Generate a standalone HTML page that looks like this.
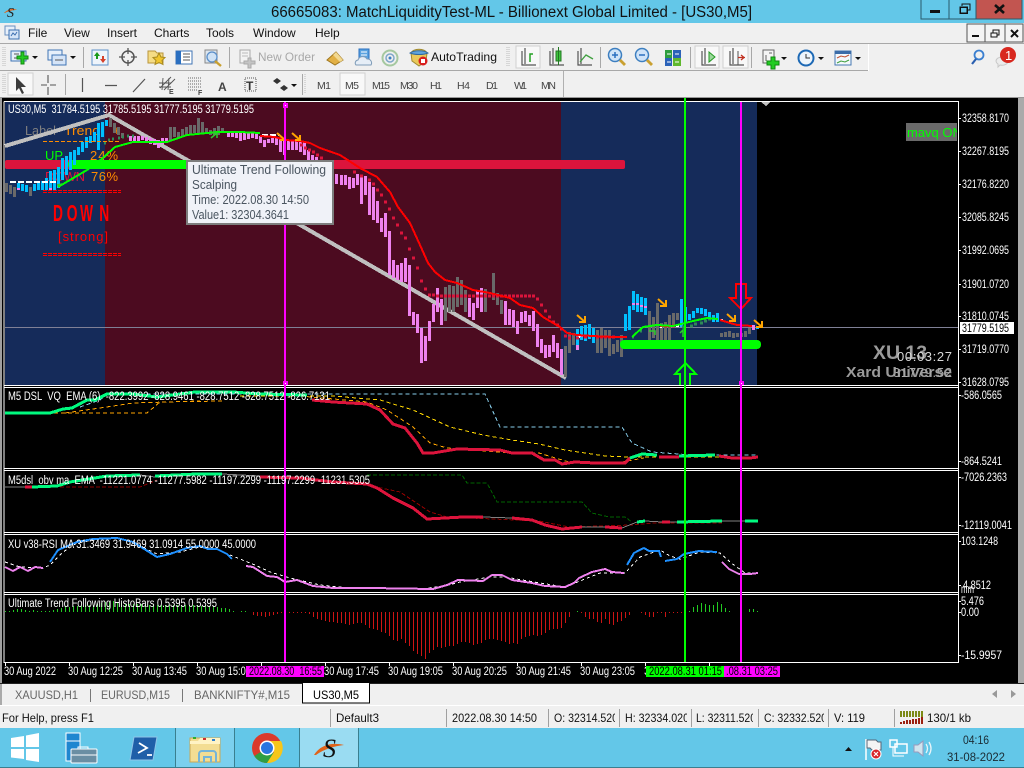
<!DOCTYPE html>
<html><head><meta charset="utf-8"><title>66665083: MatchLiquidityTest-ML</title>
<style>
html,body{margin:0;padding:0;width:1024px;height:768px;overflow:hidden;background:#f0f0f0}
svg{position:absolute;left:0;top:0;display:block}
text{font-family:"Liberation Sans",sans-serif;font-size:11.5px;white-space:pre}
.c text,text.c{fill:#fff}
.u text{font-size:12px;fill:#111}
.tf text{font-size:10.5px;fill:#444}
.ax text{fill:#fff;font-size:11.5px}
.st text{font-size:12px;fill:#111}
.cr{shape-rendering:crispEdges}
.n{fill:none}
</style></head><body>
<svg width="1024" height="768" viewBox="0 0 1024 768" xmlns="http://www.w3.org/2000/svg">
<!-- frame -->
<rect width="1024" height="768" fill="#f0f0f0"/>
<rect width="1024" height="23" fill="#63c7e8"/>
<text x="271" y="17" textLength="481" lengthAdjust="spacingAndGlyphs" fill="#111" style="font-size:15.5px">66665083: MatchLiquidityTest-ML - Billionext Global Limited - [US30,M5]</text>
<!-- app icon -->
<path d="M4 13C8 9 13 8 17 10C13 10 8 11 5 13Z" fill="#e0641a"/><text x="7" y="17" style="font-size:14px;font-style:italic;font-family:'Liberation Serif',serif" fill="#222">S</text>
<!-- window buttons -->
<g class="cr">
<rect x="921" y="-1" width="28" height="20" fill="#63c7e8" stroke="#2a5a6a"/>
<rect x="949" y="-1" width="27" height="20" fill="#63c7e8" stroke="#2a5a6a"/>
<rect x="976" y="-1" width="46" height="20" fill="#c25550" stroke="#2a5a6a"/>
<rect x="930" y="10" width="10" height="3" fill="#111"/>
<rect x="960" y="7" width="7" height="6" class="n" stroke="#111" stroke-width="1.5"/>
<path d="M962 6V4H970V10H968" class="n" stroke="#111" stroke-width="1.2"/>
</g>
<path d="M995 5L1004 13M1004 5L995 13" stroke="#111" stroke-width="2.6"/>
<!-- menu -->
<g class="u">
<text x="28" y="37">File</text><text x="64" y="37">View</text><text x="107" y="37">Insert</text><text x="154" y="37">Charts</text><text x="206" y="37">Tools</text><text x="253" y="37">Window</text><text x="315" y="37">Help</text>
</g>
<rect x="5" y="26" width="10" height="9" fill="#e8f0fa" stroke="#6a8fc0"/><rect x="9" y="30" width="10" height="9" fill="#d5e4f7" stroke="#3c6fb0"/><path d="M11 36l2-3 2 2 2-3" class="n" stroke="#3c6fb0"/>
<g class="cr">
<rect x="967" y="24" width="18" height="18" fill="#f4f4f4" stroke="#555"/><rect x="985" y="24" width="20" height="18" fill="#f4f4f4" stroke="#555"/><rect x="1005" y="24" width="18" height="18" fill="#f4f4f4" stroke="#555"/>
<rect x="972" y="35" width="7" height="2" fill="#111"/>
<rect x="991" y="33" width="6" height="4" class="n" stroke="#111"/><path d="M993 33V30H999V35H997" class="n" stroke="#111"/>
</g>
<path d="M1011 30L1018 37M1018 30L1011 37" stroke="#111" stroke-width="2"/>
<!-- toolbars -->
<g class="cr">
<rect x="0" y="43" width="1024" height="1" fill="#a8a8a8"/>
<rect x="0" y="70" width="868" height="1" fill="#a8a8a8"/>
<rect x="868" y="44" width="1" height="27" fill="#fff"/>
<rect x="563" y="71" width="1" height="26" fill="#b0b0b0"/>
<path d="M3 47V67M5 47V67M3 74V94M5 74V94M507 47V67M509 47V67M305 74V94" stroke="#bbb" stroke-dasharray="1 1"/>
<path d="M83.500 47V68M229.500 47V68M600.500 47V68M690.500 47V68M751.500 47V68M65.500 74V95M302.500 74V95" stroke="#a8a8a8"/>
<g fill="#f8f8f8" stroke="#d0d0d0"><rect x="516" y="46" width="24" height="22"/><rect x="695" y="46" width="24" height="22"/><rect x="723" y="46" width="25" height="22"/><rect x="8" y="73" width="25" height="22"/><rect x="340" y="73" width="25" height="22"/></g>
</g>
<!-- tb1 icons -->
<rect x="11" y="51" width="15" height="10" fill="#e6effa" stroke="#3f74b5"/><path d="M14 54h5M14 58h8" stroke="#555"/><path d="M21 52h3v4h4v3h-4v5h-3v-5h-4v-3h4z" fill="#22cc22" stroke="#118811"/>
<path d="M32 56h6l-3 3z" fill="#111"/>
<rect x="48" y="50" width="14" height="10" fill="#e6effa" stroke="#3f74b5"/><rect x="52" y="55" width="14" height="10" fill="#d5e4f7" stroke="#3f74b5"/><path d="M55 60h8" stroke="#555"/>
<path d="M70 56h6l-3 3z" fill="#111"/>
<rect x="92" y="50" width="16" height="15" fill="#eef4fb" stroke="#5b8fc9"/><path d="M97 52l3 4h-2v3h-2v-3h-2z" fill="#1a9a1a"/><path d="M103 63l-3-4h2v-3h2v3h2z" fill="#d5402a"/>
<circle cx="128" cy="57" r="6" class="n" stroke="#555" stroke-width="1.5"/><path d="M128 48v6M128 60v6M119 57h6M131 57h6" stroke="#555" stroke-width="1.3"/>
<path d="M148 51h7l2 2h6v10h-15z" fill="#f5dc85" stroke="#b9953a"/><path d="M159 53l2 4 4 .5-3 3 1 4-4-2-4 2 1-4-3-3 4-.5z" fill="#f0c52e" stroke="#a88a20"/>
<rect x="176" y="51" width="16" height="13" fill="#fff" stroke="#3f74b5"/><rect x="176" y="51" width="5" height="13" fill="#2a6fc0"/><path d="M183 54h7M183 57h7M183 60h7" stroke="#555"/>
<rect x="205" y="50" width="12" height="13" fill="#dde6ef" stroke="#888"/><circle cx="212" cy="57" r="5" fill="#cfe2f5" stroke="#5b8fc9" stroke-width="1.3"/><path d="M215 61l6 5" stroke="#c9a030" stroke-width="2.4"/>
<rect x="240" y="50" width="10" height="13" fill="#f3f3f3" stroke="#aaa"/><path d="M242 53h6M242 56h6" stroke="#bbb"/><path d="M248 58h3v3h4v3h-4v4h-3v-4h-4v-3h4z" fill="#c4c4c4" stroke="#aaa"/>
<text x="258" y="61" textLength="57" lengthAdjust="spacingAndGlyphs" style="font-size:12px" fill="#a8a8a8">New Order</text>
<path d="M327 60l9-8 7 8-8 5z" fill="#e2b045" stroke="#a07820"/><path d="M336 52l7 8-3 2-7-7z" fill="#f2d890"/>
<rect x="359" y="49" width="10" height="12" fill="#5ba3e0" stroke="#2a6fc0"/><path d="M361 52h6M361 55h6" stroke="#fff"/><path d="M356 65a3 3 0 0 1 2-5 5 5 0 0 1 9-1 4 4 0 0 1 4 6z" fill="#e6eef7" stroke="#7f9cb8"/>
<circle cx="390" cy="58" r="7.500" class="n" stroke="#a5c8a0" stroke-width="2"/><circle cx="390" cy="58" r="4" class="n" stroke="#7fa7c9" stroke-width="1.5"/><circle cx="390" cy="58" r="1.500" fill="#3d7fc0"/>
<path d="M411 53c2-5 14-5 16 0l-1 8-7 5-7-5z" fill="#e9c95a" stroke="#a08a30"/><path d="M410 53c4-3 14-3 18 0-4 2-14 2-18 0z" fill="#5fa4dc" stroke="#31699c"/><circle cx="423" cy="61" r="4.500" fill="#d81e1e"/><rect x="421" y="59" width="4" height="4" fill="#fff"/>
<text x="431" y="61" textLength="66" lengthAdjust="spacingAndGlyphs" style="font-size:12px" fill="#111">AutoTrading</text>
<g stroke="#555" class="n" stroke-width="1.200">
<path d="M522 51V65H536M525 48v16"/><path d="M550 51V65H564M553 48v16"/><path d="M578 51V65H592M581 48v16"/><path d="M702 51V65H716M705 48v16"/><path d="M730 51V65H744M733 48v16"/>
</g>
<path d="M530 62V54h3" class="n" stroke="#22a022" stroke-width="1.500"/>
<rect x="556" y="51" width="5" height="10" fill="#3ec43e" stroke="#227722"/><path d="M558.500 47v18" stroke="#227722"/>
<path d="M580 62l6-7 7 4" class="n" stroke="#40a040" stroke-width="1.300"/>
<path d="M709 52l6 5-6 5z" fill="#9ad89a" stroke="#229922"/>
<path d="M738 51v14" stroke="#555"/><path d="M738 57.500h7M741 55l3 2.500-3 2.500" class="n" stroke="#c03020" stroke-width="1.300"/>
<g><circle cx="615" cy="55" r="6.500" fill="#cfe3f8" stroke="#3d7fc0" stroke-width="1.500"/><path d="M612 55h6M615 52v6" stroke="#2a6fc0" stroke-width="1.500"/><path d="M620 60l5 5" stroke="#c9a030" stroke-width="2.800"/>
<circle cx="642" cy="55" r="6.500" fill="#cfe3f8" stroke="#3d7fc0" stroke-width="1.500"/><path d="M639 55h6" stroke="#2a6fc0" stroke-width="1.500"/><path d="M647 60l5 5" stroke="#c9a030" stroke-width="2.800"/></g>
<g class="cr"><rect x="665" y="50" width="7" height="8" fill="#2e9e3e"/><rect x="673" y="50" width="8" height="8" fill="#2b62b8"/><rect x="665" y="58" width="7" height="8" fill="#2b62b8"/><rect x="673" y="58" width="8" height="8" fill="#5fb82e"/><path d="M667 54h4M675 54h4M667 62h4M675 62h4" stroke="#fff"/></g>
<rect x="763" y="50" width="11" height="13" fill="#f4f4f4" stroke="#666"/><path d="M766 55v6M769 53h3" stroke="#666"/><path d="M771 57h4v4h4v4h-4v4h-4v-4h-4v-4h4z" fill="#22cc22" stroke="#118811"/>
<path d="M781 57h6l-3 3z" fill="#111"/>
<circle cx="806" cy="58" r="7.500" fill="#eef5fb" stroke="#1d69b5" stroke-width="2"/><path d="M806 54v4h4" class="n" stroke="#333"/>
<path d="M818 57h6l-3 3z" fill="#111"/>
<rect x="835" y="51" width="16" height="14" fill="#f4f8fc" stroke="#4678b2"/><rect x="835" y="51" width="16" height="3" fill="#3b6ca8"/><path d="M837 58l4-2 4 1 4-2" class="n" stroke="#c05030"/><path d="M837 63l4-2 4 1 4-2" class="n" stroke="#40a040"/>
<path d="M855 57h6l-3 3z" fill="#111"/>
<circle cx="979" cy="55" r="4.500" class="n" stroke="#3a7fd0" stroke-width="1.800"/><path d="M976 59l-4 5" stroke="#2a5fb0" stroke-width="2.200"/>
<path d="M996 61a6 4 0 0 1 12 0 6 4 0 0 1-8 4l-2 2v-3a4 4 0 0 1-2-3z" fill="#ececec" stroke="#c8c8c8"/>
<circle cx="1008" cy="55" r="8" fill="#d8281f"/><text x="1005" y="60" fill="#fff" style="font-size:13px">1</text>
<!-- tb2 -->
<path d="M16 77v14l3-3 3 6 2-1-3-6h5z" fill="#3c3c3c"/>
<path d="M48 75v8M48 87v8M41 85h6M50 85h6" stroke="#555" stroke-width="1.100"/>
<path d="M82.500 78V92M105 85.500h12M133 92L145 79" stroke="#555" stroke-width="1.200"/>
<path d="M160 88l11-11M164 90l11-11M159 83h12M159 87h12M163 78l-1 12M169 78l-1 12" stroke="#555" stroke-width=".9"/>
<text x="169" y="94" fill="#444" style="font-size:7px;font-weight:bold">E</text>
<path d="M188 78h14M188 81h14M188 84h14M188 87h14M188 90h10" stroke="#666" stroke-dasharray="1 1"/>
<text x="198" y="95" fill="#444" style="font-size:7px;font-weight:bold">F</text>
<text x="218" y="91" fill="#444" style="font-size:12px;font-weight:bold">A</text>
<rect x="245" y="78" width="11" height="13" class="n" stroke="#555" stroke-dasharray="1 1"/><text x="246" y="90" fill="#333" style="font-size:12px;font-weight:bold">T</text>
<path d="M273 81l4-3 4 3-4 3zM280 88l4-3 4 3-4 3z" fill="#333"/><path d="M291 84h6l-3 3z" fill="#111"/>
<g class="tf">
<text x="317" y="89" textLength="14">M1</text><text x="345" y="89" textLength="14">M5</text><text x="372" y="89" textLength="18">M15</text><text x="400" y="89" textLength="18">M30</text><text x="430" y="89" textLength="12">H1</text><text x="457" y="89" textLength="13">H4</text><text x="486" y="89" textLength="12">D1</text><text x="514" y="89" textLength="13">W1</text><text x="541" y="89" textLength="15">MN</text>
</g>
<!-- chart area -->
<g class="cr">
<rect x="0" y="97" width="1024" height="1" fill="#999"/>
<rect x="2" y="98" width="1016" height="585" fill="#000"/>
<rect x="0" y="98" width="2" height="587" fill="#a0a0a0"/>
<rect x="1018" y="98" width="6" height="587" fill="#aaa"/>
<rect x="5" y="102" width="100" height="283" fill="#152b5a"/>
<rect x="105" y="102" width="456" height="283" fill="#4c0b20"/>
<rect x="561" y="102" width="196" height="283" fill="#152b5a"/>
<path d="M4 101.500H958.500V662.500H4V101.500M4 385.500H958M4 387.500H958M4 468.500H958M4 470.500H958M4 532.500H958M4 534.500H958M4 592.500H958M4 594.500H958" class="n" stroke="#fff"/>
<path d="M5 327.500H958" stroke="#7f8096"/>
</g>
<!-- overlay text (under bars) -->
<text x="25" y="135" fill="#808080" textLength="31" lengthAdjust="spacingAndGlyphs" style="font-size:13px">Label</text>
<text x="64" y="135" fill="#ff8c00" textLength="36" lengthAdjust="spacingAndGlyphs" style="font-size:13px">Trend</text>
<text x="113" y="135" fill="#ff8c00" style="font-size:13px">+</text>
<text x="45" y="160" fill="#0f0" style="font-size:13px">UP</text>
<text x="90" y="160" fill="#ff8c00" textLength="28" style="font-size:13px">24%</text>
<text x="45" y="181" fill="#dc143c" textLength="40" style="font-size:13px">DOWN</text>
<text x="91" y="181" fill="#ff8c00" textLength="27" style="font-size:13px">76%</text>
<!-- trend line -->
<path class="cr n" d="M5 146L109 115L566 378" stroke="#c0c0c0" stroke-width="4"/>
<!-- red/green bars -->
<rect x="5" y="160" width="620" height="9" rx="2" fill="#dc143c"/>
<rect x="68" y="160" width="125" height="9" rx="4" fill="#00ff00"/>
<!-- candles -->
<g class="cr n" stroke-width="3">
<path stroke="#696969" d="M6.500 183V192M10.500 185V194M14.500 187V197M30.500 187V196M110.500 118V127M114.500 123V133M118.500 127V135M122.500 133V138M170.500 127V140M174.500 127V137M178.500 132V138M182.500 129V136M186.500 127V135M190.500 125V135M194.500 125V133M198.500 118V133M202.500 122V133M206.500 128V133M210.500 130V135M214.500 128V135M218.500 126V135M222.500 128V133
M445.500 287V321M449.500 285V312M453.500 286V312M457.500 277V307M461.500 280V305M465.500 290V312M485.500 289V312M493.500 273V300M497.500 293V305M501.500 300V314M565.500 346V377M569.500 332V353M573.500 333V345M597.500 330V353M601.500 328V353M605.500 330V348M609.500 330V356M613.500 344V354M617.500 340V352M621.500 335V357
M649.500 311V340M653.500 317V338M657.500 303V340M661.500 323V340M665.500 322V340M669.500 315V340M673.500 313V327M677.500 313V320M721.500 333V337M725.500 332V337M729.500 331V337M733.500 333V338M737.500 333V337M741.500 333V337M745.500 331V337M749.500 328V334"/>
<path stroke="#00bfff" d="M18.500 183V190M22.500 184V191M26.500 185V192M34.500 184V191M38.500 183V190M42.500 181V190M46.500 178V190M50.500 171V190M54.500 170V190M58.500 167V188M62.500 158V180M66.500 156V175M70.500 152V170M74.500 150V165M78.500 147V155M82.500 142V152M86.500 137V148M90.500 136V143M94.500 132V142M98.500 123V150M102.500 122V137M106.500 120V126
M577.500 329V350M581.500 326V340M585.500 325V341M589.500 324V339M593.500 328V343M625.500 314V331M629.500 306V330M633.500 291V310M637.500 294V312M641.500 297V312M645.500 298V315M681.500 299V327M685.500 307V323M689.500 314V320M693.500 311V318M697.500 308V313M701.500 308V314M705.500 309V316M709.500 312V320M713.500 315V322M717.500 313V322M753.500 326V330M757.500 326V329"/>
<path stroke="#ee82ee" d="M130.500 136V141M134.500 136V141M138.500 136V141M142.500 136V140M146.500 137V143M150.500 138V144M154.500 139V145M158.500 140V148M162.500 138V144M166.500 138V143
M228.500 133V137M232.500 132V137M236.500 132V138M240.500 132V141M244.500 132V140M248.500 132V139M252.500 133V138M256.500 133V139M260.500 136V143M264.500 140V147M268.500 139V143M272.500 138V143M276.500 138V145M280.500 138V152M284.500 140V155M288.500 140V150M292.500 140V150M296.500 141V150M300.500 142V152M304.500 142V155M308.500 150V162M312.500 155V163M316.500 157V163M320.500 160V172M324.500 165V180M328.500 167V182M332.500 172V183M336.500 174V184
M341.500 175V185M345.500 175V185M349.500 177V189M353.500 178V188M357.500 174V185M361.500 175V204M365.500 176V195M369.500 182V215M373.500 187V220M377.500 201V223M381.500 218V232M385.500 213V237M389.500 231V275M393.500 260V278M397.500 265V280M401.500 263V282M405.500 258V282M409.500 265V316M413.500 312V325M417.500 314V333M421.500 328V363M425.500 336V361M429.500 321V341M433.500 304V322M437.500 288V312M441.500 299V325
M469.500 298V317M473.500 303V320M477.500 290V308M481.500 288V312M505.500 301V325M509.500 309V325M513.500 310V327M517.500 321V334M521.500 312V323M525.500 311V322M529.500 315V326M533.500 311V331M537.500 324V347M541.500 339V353M545.500 345V358M549.500 345V357M553.500 335V352M557.500 343V358M561.500 349V375"/>
<path stroke="#ee82ee" d="M577.500 345V350M581.500 335V337M585.500 335V337M633.500 303V305M637.500 303V305M641.500 305V307M645.500 306V308M18.500 188V190M50.500 188V190M753.500 325V330"/>
</g>
<!-- white dashes -->
<path class="n cr" d="M10 182h48M262 135h18M578 337h2M660 327h2M676 326h3M720 320h3" stroke="#fff" stroke-width="2" stroke-dasharray="6 2"/>
<!-- dots -->
<path class="n cr" stroke="#dc143c" stroke-width="3" d="M353 172h3M360 176h3M368 180h3M372 184h3M376 190h3M380 195h3M384 202h3M388 209h3M392 218h3M396 225h3M400 233h3M404 238h3M408 249h3M412 258h3M416 268h3M420 281h3M424 289h3M428 295h3M432 295h3M436 296h3M440 296h3M444 296h3M448 296h3M452 296h3M456 296h3M460 296h3M464 296h3M468 296h3M472 296h3M476 296h3M480 296h3M484 296h3M488 296h3M492 296h3M496 296h3M500 296h3M504 296h3M508 296h3M512 296h3M516 296h3M520 296h3M524 296h3M528 296h3M532 296h3M536 299h3M540 305h3M544 311h3M548 317h3M552 322h3M556 325h3M560 329h3M564 336h3M568 338h3M576 338h3M584 337h3M596 337h3M600 337h3M604 337h3M608 337h3M612 337h3M300 145h3M304 148h3M308 150h3M312 152h3M316 155h3M320 158h3M664 326h3M668 326h3M672 326h3"/>
<path class="n cr" stroke="#2e8b57" stroke-width="3" d="M104 143h2M108 140h2M112 139h2M118 138h2M122 137h2M127 136h2M132 136h2M632 337h2M640 331h2M660 325h2M682 327h3M690 326h3M694 324h3M700 323h3M704 321h3M708 319h3"/>
<!-- ma lines -->
<path class="n cr" stroke="#f00" stroke-width="2" d="M260 136L275 137L285 140L300 141L310 143L320 148L340 155L360 168L377 177L390 192L398 207L410 223L420 245L428 263L435 272L445 280L457 283L473 290L490 293L510 298L520 305L533 308L543 317L560 327L567 333L577 335L593 336L613 337L627 337"/>
<path class="n cr" stroke="#f00" stroke-width="2" d="M660 326L673 326M720 320L737 325L752 326"/>
<path class="n cr" stroke="#0f0" stroke-width="2" d="M58 187L87 170L103 158L115 147L133 142L167 142L187 135L217 132L240 132L260 133"/>
<path class="n cr" stroke="#0f0" stroke-width="2" d="M632 337L643 327L657 325L673 326L693 321L707 318L718 319"/>
<!-- arrows -->
<g class="n" stroke="#ffa500" stroke-width="2"><path d="M277 133l8 7m0-5v5h-5"/><path d="M292 133l8 7m0-5v5h-5"/><path d="M577 315l8 7m0-6v6h-6"/><path d="M658 299l8 7m0-6v6h-6"/><path d="M727 314l8 7m0-6v6h-6"/><path d="M754 320l8 7m0-6v6h-6"/></g>
<path class="n" stroke="#2dcc2d" stroke-width="1.500" d="M57 185l5-1M211 138l6-5m-5 0h5v5M655 335v-4h-6M683 337v-7l-3 3"/>
<!-- second green bar -->
<rect x="620" y="340" width="141" height="9" rx="4" fill="#0f0"/>
<!-- overlay dashes and DOWN -->
<path class="cr" d="M43 141.500H121" stroke="#ff8c00" stroke-dasharray="4 2"/>
<path class="cr" d="M43 190.500H121M43 192.500H121M43 253.500H121M43 255.500H121" stroke="#f00" stroke-dasharray="4 1"/>
<text transform="translate(53,221) scale(.6,1)" x="0 23 45 77" y="0" fill="#f00" style="font-size:23px;font-weight:bold">DOWN</text>
<text x="58" y="241" fill="#f00" textLength="50" style="font-size:13px">[strong]</text>
<rect class="cr" x="906" y="123" width="51" height="18" fill="#6a6a6a"/>
<svg x="906" y="123" width="51" height="18"><text x="1" y="14" fill="#0f0" style="font-size:13px">mavq ON</text></svg>
<!-- right overlay labels -->
<text x="873" y="359" fill="#9a9a9a" textLength="54" lengthAdjust="spacingAndGlyphs" style="font-size:19px;font-weight:bold">XU 13</text>
<text x="846" y="377" fill="#9a9a9a" textLength="106" lengthAdjust="spacingAndGlyphs" style="font-size:15px;font-weight:bold">Xard Universe</text>
<text x="897" y="361" fill="#d8d8d8" textLength="55" style="font-size:13px">00:03:27</text>
<text x="893" y="377" fill="#a8a8a8" textLength="59" style="font-size:13px">31779.52</text>
<!-- big arrows -->
<path class="n cr" stroke="#f00" stroke-width="2" d="M736 284H746V298H751L741 309L730 298H736Z"/>
<path class="n cr" stroke="#0f0" stroke-width="2" d="M680 385V374H675L685.500 363L696 374H690V385"/>
<!-- pane 2 -->
<g class="n cr" stroke-width="1" stroke-dasharray="4 3">
<path stroke="#87ceeb" d="M80 407L100 400L107 394H485L500 427H622L632 443L652 452L692 455H758"/>
<path stroke="#ffa500" d="M5 413H147L160 402L223 401"/>
<path stroke="#ffa500" d="M65 413L100 408L133 403L200 401"/>
<path stroke="#ffd700" d="M240 396H333L380 400L413 410L450 427L483 435L512 440L539 444L565 450L605 456L629 457H758"/>
<path stroke="#ffa500" d="M300 396L367 402L387 410L413 427L430 443L447 448L512 453H539L552 457L569 462H622L644 458"/>
</g>
<g class="n cr" stroke-width="3">
<path stroke="#00fa7f" d="M5 413L50 413L63 409L72 408L87 400L95 400L107 394L133 394L157 397L195 392L233 392L260 394L307 395"/>
<path stroke="#dc143c" d="M312 400L333 402L367 404L380 410L393 424L405 428L417 443L423 453L433 453L457 449L500 450L512 453L532 453L544 460L555 460L562 464L575 462L595 463L625 463L630 458"/>
<path stroke="#00fa7f" d="M630 458L642 454L657 455M679 456L715 455"/>
<path stroke="#dc143c" d="M659 457L679 457M719 456L732 458L750 458L758 457"/>
</g>
<!-- pane 3 -->
<g class="n cr">
<path stroke="#006400" stroke-dasharray="4 2" d="M367 475H462L467 483H487L497 502H582L592 513L609 517H625L632 522"/>
<path stroke="#8b0000" stroke-dasharray="4 2" d="M60 487H140L157 480M367 485L400 492L430 512L447 517L539 521L569 527L632 525L655 523L685 523H722"/>
<path stroke="#808080" d="M5 487H25M140 475L155 477L197 474M222 474L260 476M483 517L512 518M582 527L605 527M622 528L637 522M645 521L662 522M662 522H677M722 521H745"/>
</g>
<g class="n cr" stroke-width="3">
<path stroke="#00fa7f" d="M32 487L57 486L70 482L107 476L140 475M155 476L197 474L222 474M637 522L645 521M677 522L722 521M745 521L758 521"/>
<path stroke="#dc143c" d="M25 487H32M260 477L300 478L333 482L367 484L377 488L393 498L413 508L427 519L463 517L483 517M512 518L532 520L545 525L562 529L582 527M605 527L622 528M662 522H670"/>
</g>
<!-- pane 4 -->
<path class="n cr" stroke="#fff" stroke-dasharray="3 3" d="M5 562L20 567L43 568L50 565L63 552L77 543L100 539L120 538L140 546L157 554L180 552L200 547L215 549L235 557L255 565L270 572L290 578L320 585L350 588L420 589L445 586L460 582L490 577L505 577L540 583L565 587L580 581L600 573L625 573L640 557L660 550L670 556L680 559L700 552L720 553L730 562L745 573L758 573"/>
<g class="n cr" stroke-width="2">
<path stroke="#ee82ee" d="M5 567L13 571L20 567L28 571L35 567L43 568"/>
<path stroke="#1e90ff" d="M50 562L58 550L77 542L93 539L117 538L133 542L157 557L170 554L187 548L200 546L208 549L217 549L227 554L232 559"/>
<path stroke="#ee82ee" d="M246 566L253 567L267 576L277 577L285 582L297 580L313 586L333 588L370 588L433 589L447 585L458 580L483 581L492 575L502 575L512 580L532 583L545 586L565 587L574 583L579 578L592 572L605 569L612 572L624 573"/>
<path stroke="#1e90ff" d="M627 565L634 553L644 548L649 551L659 551L661 557M665 561L677 559L684 554L699 551L717 552"/>
<path stroke="#ee82ee" d="M722 562L729 569L739 574L750 574L758 573"/>
</g>
<!-- pane 5 histogram -->
<g class="cr n">
<path stroke="#22cc22" d="M5.500 612v-1M9.500 612v-1M13.500 612v-2M17.500 612v-3M21.500 612v-3M25.500 612v-2M29.500 612v-1M33.500 612v-2M37.500 612v-1M41.500 612v-1M45.500 612v-1M49.500 612v-1M53.500 612v-2M57.500 612v-3M61.500 612v-4M65.500 612v-5M69.500 612v-5M73.500 612v-6M77.500 612v-6M81.500 612v-6M85.500 612v-7M89.500 612v-7M93.500 612v-7M97.500 612v-8M101.500 612v-9M105.500 612v-10M109.500 612v-10M113.500 612v-11M117.500 612v-9M121.500 612v-9M125.500 612v-8M129.500 612v-8M133.500 612v-8M137.500 612v-8M141.500 612v-8M145.500 612v-8M149.500 612v-7M153.500 612v-7M157.500 612v-7M161.500 612v-7M165.500 612v-7M169.500 612v-7M173.500 612v-7M177.500 612v-7M181.500 612v-7M185.500 612v-7M189.500 612v-7M193.500 612v-7M197.500 612v-7M201.500 612v-6M205.500 612v-6M209.500 612v-6M213.500 612v-6M217.500 612v-5M221.500 612v-4M225.500 612v-4M229.500 612v-3M233.500 612v-1M241.500 612v-1M245.500 612v-1M577.500 612v-1M689.500 612v-1M693.500 612v-5M697.500 612v-7M701.500 612v-9M705.500 612v-8M709.500 612v-7M713.500 612v-7M717.500 612v-10M721.500 612v-8M725.500 612v-4M729.500 612v-1M749.500 612v-3M753.500 612v-3M757.500 612v-1"/>
<path stroke="#cc1414" d="M253.500 612v3M257.500 612v4M261.500 612v4M265.500 612v5M269.500 612v4M273.500 612v3M277.500 612v2M281.500 612v1M289.500 612v1M293.500 612v1M297.500 612v1M301.500 612v1M305.500 612v1M309.500 612v2M313.500 612v5M317.500 612v7M321.500 612v8M325.500 612v9M329.500 612v10M333.500 612v10M337.500 612v11M341.500 612v11M345.500 612v12M349.500 612v13M353.500 612v12M357.500 612v11M361.500 612v11M365.500 612v13M369.500 612v16M373.500 612v17M377.500 612v18M381.500 612v20M385.500 612v21M389.500 612v24M393.500 612v28M397.500 612v29M401.500 612v27M405.500 612v31M409.500 612v34M413.500 612v39M417.500 612v42M421.500 612v44M425.500 612v47M429.500 612v41M433.500 612v38M437.500 612v35M441.500 612v36M445.500 612v35M449.500 612v34M453.500 612v34M457.500 612v32M461.500 612v30M465.500 612v30M469.500 612v31M473.500 612v33M477.500 612v32M481.500 612v31M485.500 612v28M489.500 612v27M493.500 612v27M497.500 612v28M501.500 612v29M505.500 612v30M509.500 612v32M513.500 612v31M517.500 612v32M521.500 612v27M525.500 612v25M529.500 612v24M533.500 612v23M537.500 612v24M541.500 612v23M545.500 612v21M549.500 612v18M553.500 612v17M557.500 612v17M561.500 612v16M565.500 612v11M569.500 612v5M581.500 612v1M585.500 612v5M589.500 612v7M593.500 612v7M597.500 612v10M601.500 612v11M605.500 612v7M609.500 612v12M613.500 612v13M617.500 612v10M621.500 612v9M625.500 612v6M629.500 612v3M641.500 612v1M645.500 612v3M649.500 612v5M653.500 612v5M657.500 612v1M661.500 612v1M665.500 612v5M669.500 612v1M673.500 612v1M677.500 612v1M681.500 612v1"/>
</g>
<!-- vlines -->
<g class="cr">
<rect x="284" y="102" width="2" height="560" fill="#f0f"/>
<rect x="684" y="98" width="2" height="564" fill="#0f0"/>
<rect x="740" y="102" width="2" height="560" fill="#f0f"/>
<path d="M283 103h5v5h-5zM283 381h5v4h-5zM739 381h5v4h-5z" fill="#f0f"/><path d="M285 105h1v1h-1zM285 383h1v1h-1zM741 383h1v1h-1z" fill="#fff"/>
<path d="M761 102h9l-4 4z" fill="#c0c0c0"/>
</g>
<!-- tooltip -->
<rect x="187" y="161" width="146" height="63" fill="#f0f2f8" stroke="#7d7d7d" stroke-width="2" class="cr"/>
<g fill="#4a5560">
<text x="192" y="174" textLength="134" lengthAdjust="spacingAndGlyphs" style="font-size:12.5px">Ultimate Trend Following</text>
<text x="192" y="189" textLength="45" lengthAdjust="spacingAndGlyphs" style="font-size:12.5px">Scalping</text>
<text x="192" y="204" textLength="117" lengthAdjust="spacingAndGlyphs" style="font-size:12.5px">Time: 2022.08.30 14:50</text>
<text x="192" y="219" textLength="97" lengthAdjust="spacingAndGlyphs" style="font-size:12.5px">Value1: 32304.3641</text>
</g>
<!-- legends -->
<g class="c">
<text x="8" y="113" textLength="246" lengthAdjust="spacingAndGlyphs">US30,M5  31784.5195 31785.5195 31777.5195 31779.5195</text>
<text x="8" y="400" textLength="322" lengthAdjust="spacingAndGlyphs">M5 DSL  VQ  EMA (6)  -822.3992 -828.9461 -828.7512 -828.7512 -826.7131</text>
<text x="8" y="484" textLength="362" lengthAdjust="spacingAndGlyphs">M5dsl  obv ma  EMA  -11221.0774 -11277.5982 -11197.2299 -11197.2299 -11231.5305</text>
<text x="8" y="548" textLength="248" lengthAdjust="spacingAndGlyphs">XU v38-RSI MA 31.3469 31.9469 31.0914 55.0000 45.0000</text>
<text x="8" y="607" textLength="209" lengthAdjust="spacingAndGlyphs">Ultimate Trend Following HistoBars 0.5395 0.5395</text>
</g>
<!-- right axis -->
<path class="cr" stroke="#fff" d="M958 118.500h3M958 151.500h3M958 184.500h3M958 217.500h3M958 250.500h3M958 284.500h3M958 316.500h3M958 349.500h3M958 382.500h3M958 395.500h3M958 461.500h3M958 477.500h3M958 525.500h3M958 541.500h3M958 585.500h3M958 601.500h3M958 612.500h3M958 655.500h3"/>
<g class="ax">
<text x="962" y="122" textLength="47" lengthAdjust="spacingAndGlyphs">32358.8170</text>
<text x="962" y="155" textLength="47" lengthAdjust="spacingAndGlyphs">32267.8195</text>
<text x="962" y="188" textLength="47" lengthAdjust="spacingAndGlyphs">32176.8220</text>
<text x="962" y="221" textLength="47" lengthAdjust="spacingAndGlyphs">32085.8245</text>
<text x="962" y="254" textLength="47" lengthAdjust="spacingAndGlyphs">31992.0695</text>
<text x="962" y="288" textLength="47" lengthAdjust="spacingAndGlyphs">31901.0720</text>
<text x="962" y="320" textLength="47" lengthAdjust="spacingAndGlyphs">31810.0745</text>
<text x="962" y="353" textLength="47" lengthAdjust="spacingAndGlyphs">31719.0770</text>
<text x="962" y="386" textLength="47" lengthAdjust="spacingAndGlyphs">31628.0795</text>
<text x="961" y="399" textLength="41" lengthAdjust="spacingAndGlyphs">-586.0565</text>
<text x="961" y="465" textLength="41" lengthAdjust="spacingAndGlyphs">-864.5241</text>
<text x="961" y="481" textLength="46" lengthAdjust="spacingAndGlyphs">-7026.2363</text>
<text x="961" y="529" textLength="51" lengthAdjust="spacingAndGlyphs">-12119.0041</text>
<text x="961" y="545" textLength="37" lengthAdjust="spacingAndGlyphs">103.1248</text>
<text x="963" y="589" textLength="28" lengthAdjust="spacingAndGlyphs">4.8512</text>
<text x="961" y="593" textLength="13" lengthAdjust="spacingAndGlyphs">mm</text>
<text x="961" y="605" textLength="23" lengthAdjust="spacingAndGlyphs">5.476</text>
<text x="961" y="616" textLength="18" lengthAdjust="spacingAndGlyphs">0.00</text>
<text x="961" y="659" textLength="41" lengthAdjust="spacingAndGlyphs">-15.9957</text>
</g>
<rect class="cr" x="960" y="322" width="54" height="12" fill="#fff"/>
<text x="962" y="332" fill="#000" textLength="47" lengthAdjust="spacingAndGlyphs">31779.5195</text>
<!-- time axis -->
<path class="cr" stroke="#fff" d="M5.500 663v3M69.500 663v3M133.500 663v3M197.500 663v3M261.500 663v3M325.500 663v3M389.500 663v3M453.500 663v3M517.500 663v3M581.500 663v3M645.500 663v3M709.500 663v3"/>
<g class="c">
<text x="4" y="675" textLength="52" lengthAdjust="spacingAndGlyphs">30 Aug 2022</text>
<text x="68" y="675" textLength="55" lengthAdjust="spacingAndGlyphs">30 Aug 12:25</text>
<text x="132" y="675" textLength="55" lengthAdjust="spacingAndGlyphs">30 Aug 13:45</text>
<text x="196" y="675" textLength="55" lengthAdjust="spacingAndGlyphs">30 Aug 15:05</text>
<text x="324" y="675" textLength="55" lengthAdjust="spacingAndGlyphs">30 Aug 17:45</text>
<text x="388" y="675" textLength="55" lengthAdjust="spacingAndGlyphs">30 Aug 19:05</text>
<text x="452" y="675" textLength="55" lengthAdjust="spacingAndGlyphs">30 Aug 20:25</text>
<text x="516" y="675" textLength="55" lengthAdjust="spacingAndGlyphs">30 Aug 21:45</text>
<text x="580" y="675" textLength="55" lengthAdjust="spacingAndGlyphs">30 Aug 23:05</text>
<text x="644" y="675">3</text>
</g>
<g class="cr"><rect x="246" y="666" width="78" height="11" fill="#f0f"/><rect x="646" y="666" width="78" height="11" fill="#0f0"/><rect x="724" y="666" width="56" height="11" fill="#f0f"/></g>
<text x="249" y="675" textLength="73" lengthAdjust="spacingAndGlyphs" fill="#000">2022.08.30  16:55</text>
<text x="649" y="675" textLength="73" lengthAdjust="spacingAndGlyphs" fill="#000">2022.08.31 01:15</text>
<text x="726" y="675" textLength="52" lengthAdjust="spacingAndGlyphs" fill="#000">.08.31 03:25</text>
<!-- tabs -->
<g class="cr">
<rect x="0" y="683" width="1024" height="22" fill="#f0f0f0"/>
<rect x="0" y="683" width="1024" height="1" fill="#222"/>
<rect x="302.500" y="684" width="67" height="19" fill="#fff" stroke="#000"/>
<rect x="303" y="683" width="66" height="2" fill="#fff"/>
<rect x="0" y="684" width="2" height="21" fill="#aaa"/>
<path d="M90.500 689V702M182.500 689V702" stroke="#777"/>
<rect x="0" y="705" width="1024" height="1" fill="#fff"/>
<path d="M330.500 709V727M446.500 709V727M548.500 709V727M619.500 709V727M691.500 709V727M758.500 709V727M828.500 709V727M894.500 709V727" stroke="#a0a0a0"/>
</g>
<g class="st">
<text x="15" y="699" textLength="63" lengthAdjust="spacingAndGlyphs" style="fill:#666">XAUUSD,H1</text>
<text x="101" y="699" textLength="69" lengthAdjust="spacingAndGlyphs" style="fill:#666">EURUSD,M15</text>
<text x="194" y="699" textLength="96" lengthAdjust="spacingAndGlyphs" style="fill:#666">BANKNIFTY#,M15</text>
<text x="313" y="699" textLength="46" lengthAdjust="spacingAndGlyphs" style="fill:#000">US30,M5</text>
<text x="2" y="722" textLength="92" lengthAdjust="spacingAndGlyphs">For Help, press F1</text>
<text x="336" y="722" textLength="43" lengthAdjust="spacingAndGlyphs">Default3</text>
<text x="452" y="722" textLength="85" lengthAdjust="spacingAndGlyphs">2022.08.30 14:50</text>
<text x="554" y="722" textLength="64" lengthAdjust="spacingAndGlyphs">O: 32314.520</text>
<text x="625" y="722" textLength="64" lengthAdjust="spacingAndGlyphs">H: 32334.020</text>
<text x="696" y="722" textLength="60" lengthAdjust="spacingAndGlyphs">L: 32311.520</text>
<text x="764" y="722" textLength="63" lengthAdjust="spacingAndGlyphs">C: 32332.520</text>
<text x="834" y="722" textLength="31" lengthAdjust="spacingAndGlyphs">V: 119</text>
<text x="927" y="722" textLength="44" lengthAdjust="spacingAndGlyphs">130/1 kb</text>
</g>
<g class="cr" fill="#f0f0f0"><rect x="615" y="710" width="4" height="14"/><rect x="687" y="710" width="4" height="14"/><rect x="753" y="710" width="5" height="14"/><rect x="824" y="710" width="4" height="14"/></g>
<path d="M997 690v8l-5-4zM1011 690v8l5-4z" fill="#999"/>
<g class="cr"><path d="M901 711v6M904 711v6M907 711v6M910 711v6M913 711v6M916 711v6M919 711v6M922 711v6" stroke="#7c8a16" stroke-width="2"/><path d="M901 724v-2M904 724v-3M907 724v-4M910 724v-4M913 724v-5M916 724v-5M919 724v-6M922 724v-7" stroke="#9c2010" stroke-width="2"/></g>
<!-- taskbar -->
<g class="cr">
<rect x="0" y="728" width="1024" height="40" fill="#63c7e8"/>
<rect x="175" y="728" width="60" height="40" fill="#7bd0ee"/>
<rect x="299" y="728" width="59" height="40" fill="#9adcf2"/>
<path d="M175.500 728V767M234.500 728V767M299.500 728V767M358.500 728V767" stroke="#3a7f8f"/>
<rect x="0" y="767" width="1024" height="1" fill="#3a7f8f"/>
</g>
<path d="M11 738L24 736V747H11ZM26 735.500L39 733V747H26ZM11 749H24V759L11 757.500ZM26 749H39V762L26 760Z" fill="#fff"/>
<rect x="66" y="733" width="14" height="28" fill="#1e86d0" stroke="#fff"/><path d="M66 741h14" stroke="#fff"/>
<rect x="71" y="749" width="26" height="14" rx="1" fill="#6a8ea3" stroke="#fff"/><path d="M78 749v-2h10v2M71 755h26" class="n" stroke="#fff"/>
<path d="M134 737H157L153 760H130Z" fill="#1f5fa8" stroke="#8fc4e8"/><path d="M139 743l8 5-9 5M147 755h5" class="n" stroke="#fff" stroke-width="1.800"/>
<path d="M190 738h30v24h-30z" fill="#f3dd93" stroke="#c9a855"/><path d="M190 741h8l2-3h20v6h-30z" fill="#fff3c4"/><rect x="193" y="737" width="3" height="2" fill="#2faf2f"/><rect x="203" y="738" width="3" height="2" fill="#d03030"/><rect x="212" y="739" width="3" height="2" fill="#2f7fd0"/><path d="M199 762v-8a3 3 0 0 1 3-3h11a3 3 0 0 1 3 3v8M204 762v-5h7v5" class="n" stroke="#74b4d8" stroke-width="2"/>
<circle cx="267" cy="748" r="15" fill="#db3a2c"/>
<path d="M267 748L254.300 756A15 15 0 0 0 267 763L275 754Z" fill="#2f9e44"/>
<path d="M267 741H281A15 15 0 0 1 267 763L274 752Z" fill="#f7c61a"/>
<circle cx="267" cy="748" r="7.500" fill="#fff"/><circle cx="267" cy="748" r="6" fill="#2a75e0"/>
<path d="M314 755C320 745 332 742 344 745C335 746 324 749 316 755Z" fill="#e0641a"/>
<text x="323" y="757" style="font-size:26px;font-style:italic;font-family:'Liberation Serif',serif" fill="#111">S</text>
<path d="M845 751h7l-3.500-4z" fill="#111"/>
<path d="M866 739v21" stroke="#fff" stroke-width="1.500"/><path d="M867 740h9l2 2h3v8h-9l-2-2h-3z" fill="#f4f4f4" stroke="#567"/><circle cx="876" cy="754" r="5" fill="#d8262c" stroke="#fff"/><path d="M874 752l4 4M878 752l-4 4" stroke="#fff" stroke-width="1.200"/>
<rect x="890" y="740" width="7" height="7" class="n" stroke="#fff" stroke-width="1.500"/><rect x="895" y="744" width="12" height="9" class="n" stroke="#fff" stroke-width="1.500"/><path d="M893 747v9h11" class="n" stroke="#fff"/>
<path d="M914 745h4l5-4v15l-5-4h-4z" fill="#cfe4ee" stroke="#99b"/><path d="M926 744q3 4.500 0 9M929 742q4 6.500 0 13" class="n" stroke="#e8f4f8" stroke-width="1.300"/>
<text x="963" y="744" textLength="26" lengthAdjust="spacingAndGlyphs" fill="#1a2b33" style="font-size:12px">04:16</text>
<text x="947" y="761" textLength="58" lengthAdjust="spacingAndGlyphs" fill="#1a2b33" style="font-size:12px">31-08-2022</text>
</svg>
</body></html>
